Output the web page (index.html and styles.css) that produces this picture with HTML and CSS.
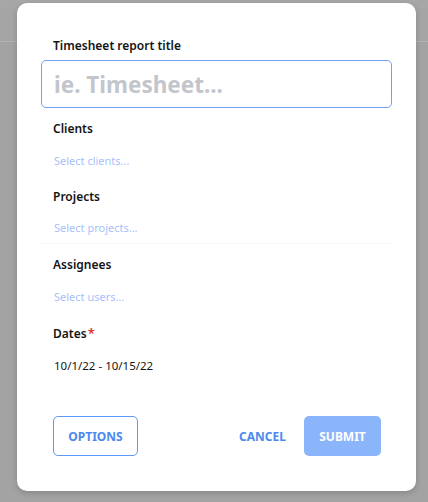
FILE: index.html
```html
<!DOCTYPE html>
<html lang="en">
<head>
<meta charset="utf-8">
<title>Timesheet report</title>
<link rel="stylesheet" href="styles.css">
</head>
<body>
<div class="page">
  <div class="page-header"></div>
</div>
<div class="modal">
  <form class="form">
    <div class="field field-title">
      <label class="label">Timesheet report title</label>
      <input class="text-input" type="text" placeholder="ie. Timesheet...">
    </div>
    <div class="field">
      <div class="label">Clients</div>
      <div class="select"><span class="placeholder">Select clients...</span></div>
    </div>
    <div class="field">
      <div class="label">Projects</div>
      <div class="select select-line"><span class="placeholder">Select projects...</span></div>
    </div>
    <div class="field">
      <div class="label">Assignees</div>
      <div class="select"><span class="placeholder">Select users...</span></div>
    </div>
    <div class="field">
      <div class="label">Dates<span class="req">*</span></div>
      <div class="select"><span class="value">10/1/22 - 10/15/22</span></div>
    </div>
    <div class="footer">
      <button type="button" class="btn btn-outline">OPTIONS</button>
      <div class="actions">
        <button type="button" class="btn btn-text">CANCEL</button>
        <button type="button" class="btn btn-primary">SUBMIT</button>
      </div>
    </div>
  </form>
</div>
</body>
</html>
```
FILE: styles.css
```css
html, body {
  margin: 0;
  padding: 0;
  height: 100%;
}
body {
  background: #a3a3a3;
  font-family: "Noto Sans", "Open Sans", Arial, sans-serif;
  overflow: hidden;
}
.page {
  height: 100%;
}
.page-header {
  height: 42px;
  border-top: 9px solid #a7a7a7;
  box-sizing: border-box;
  border-bottom: 1px solid #b3b3b3;
  background: #a5a5a5;
}
.modal {
  position: absolute;
  top: 3px;
  left: 17px;
  width: 399px;
  height: 488px;
  background: #fff;
  border-radius: 10px;
  box-shadow: 0 2px 6px rgba(0,0,0,0.18);
  box-sizing: border-box;
  padding: 34px 24px 0;
}
.form {
  display: flex;
  flex-direction: column;
}
.label {
  font-size: 12px;
  font-weight: 600;
  line-height: 18px;
  color: #141414;
  padding-left: 12px;
}
.field-title .label {
  display: block;
  margin-bottom: 5px;
}
.req {
  color: #d9302c;
  margin-left: 1px;
  font-size: 13px;
}
.text-input {
  display: block;
  width: 100%;
  height: 48px;
  box-sizing: border-box;
  border: 1px solid #6ea2f5;
  border-radius: 5px;
  padding: 0 12px;
  font-family: inherit;
  font-size: 22.5px;
  font-weight: 700;
  color: #333;
  outline: none;
  margin-bottom: 12px;
}
.text-input::placeholder {
  color: #c2c6cc;
}
.field {
  display: flex;
  flex-direction: column;
}
.select {
  height: 32px;
  display: flex;
  align-items: center;
  padding-left: 13px;
  margin-top: 6px;
  margin-bottom: 12px;
  font-size: 11px;
  box-sizing: border-box;
}
.select-line {
  border-bottom: 1px solid #f6f6f9;
}
.placeholder {
  color: #a9bffb;
}
.value {
  color: #151515;
  font-size: 11.5px;
}
.footer {
  display: flex;
  justify-content: space-between;
  align-items: center;
  padding: 0 11px 0 12px;
  margin-top: 23px;
}
.actions {
  display: flex;
  align-items: center;
  gap: 10px;
}
.btn {
  font-family: inherit;
  font-size: 12px;
  font-weight: 700;
  height: 40px;
  border-radius: 5px;
  box-sizing: border-box;
  cursor: pointer;
  letter-spacing: 0;
}
.btn-outline {
  width: 85px;
  background: #fff;
  border: 1px solid #5f98f6;
  color: #4c89ef;
}
.btn-text {
  background: none;
  border: none;
  color: #4c89ef;
  padding: 0 8px;
}
.btn-primary {
  width: 77px;
  background: #8bb5fa;
  border: none;
  color: #fff;
}
```
